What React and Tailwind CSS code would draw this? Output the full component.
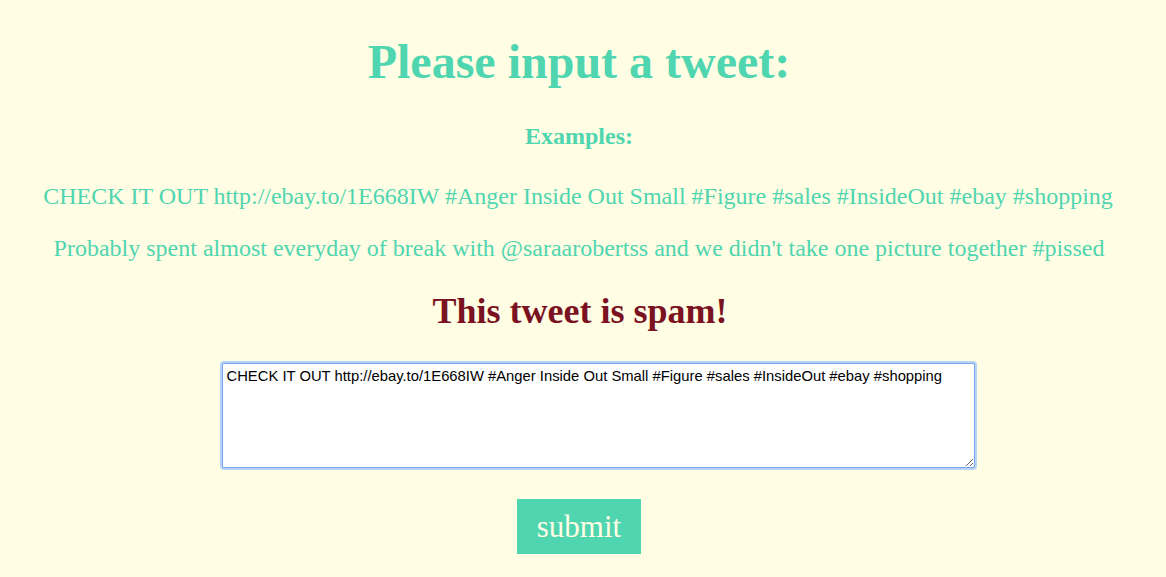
export default function App() {
  const t1 = "CHECK IT OUT http://ebay.to/1E668IW #Anger Inside Out Small #Figure #sales #InsideOut #ebay #shopping";
  const t2 = "Probably spent almost everyday of break with @saraarobertss and we didn't take one picture together #pissed";
  return (
    <div className="min-h-[577px] w-full bg-[#fffde3] text-center font-['Liberation_Serif',serif] text-[#4fd5b0]">
      <div className="flex flex-col items-center pt-[34px]">
        <h1 className="pr-[8px] text-[48px] font-bold leading-[56px]">Please input a tweet:</h1>
        <h3 className="mt-[32px] pr-[8px] text-[24px] font-bold leading-[28px]">Examples:</h3>
        <p className="mt-[32px] pr-[10px] text-[24px] leading-[28px]">{t1}</p>
        <p className="mt-[24px] pr-[8px] text-[24px] leading-[28px]">{t2}</p>
        <h2 className="mt-[28px] pr-[6px] text-[36px] font-bold leading-[42px] text-[#7a1222]">This tweet is spam!</h2>
        <textarea
          defaultValue={t1}
          className="ml-[30px] mt-[31px] h-[105px] w-[753px] resize rounded-[2px] border border-[#74a6ea] bg-white px-[4px] py-[3px] text-left font-['Liberation_Sans',sans-serif] text-[14.8px] leading-[18px] text-black shadow-[0_0_0_2px_#b8d3f6] outline-none"
        />
        <button className="mr-[8px] mt-[31px] h-[55px] w-[124px] bg-[#4fd5b0] text-[31px] leading-[55px] text-[#fffde3]">submit</button>
      </div>
    </div>
  );
}
